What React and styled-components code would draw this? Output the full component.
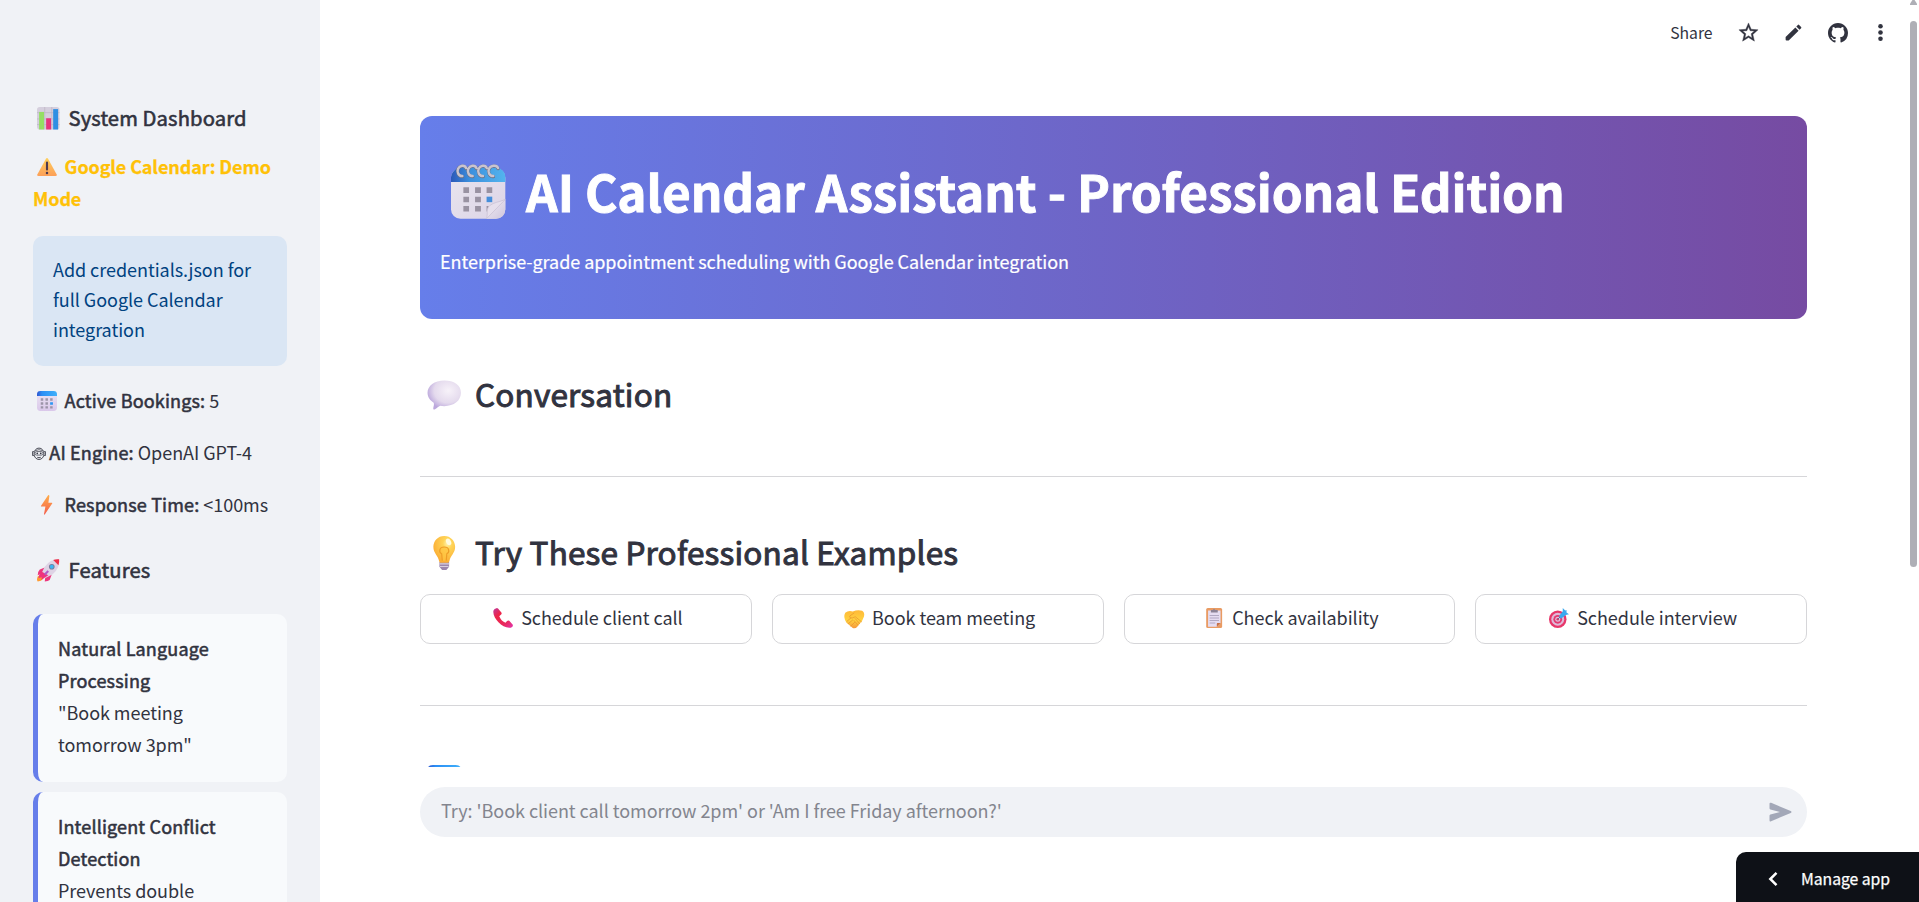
import React from "react";
import styled, { createGlobalStyle, css } from "styled-components";

const GlobalStyle = createGlobalStyle`
  * { box-sizing: border-box; }
  body {
    margin: 0;
    overflow: hidden;
    color: #31333f;
    font-family: "Noto Sans CJK SC", "Noto Sans", sans-serif;
    font-size: 18px;
    letter-spacing: -0.045px;
    line-height: 32px;
  }
  h1, h2, h3, p { margin: 0; }
`;

const semibold = (width) => css`
  font-weight: 400;
  -webkit-text-stroke: ${width}px currentColor;
`;

const Page = styled.div`
  display: flex;
  width: 100vw;
  height: 100vh;
  overflow: hidden;
  background: #fff;
`;

const Sidebar = styled.aside`
  flex: 0 0 320px;
  padding: 104px 33px 0;
  overflow: hidden;
  background: #f0f2f6;
`;

const SidebarHeading = styled.h3`
  font-size: 20.2px;
  letter-spacing: 0.12px;
  line-height: 27px;
  ${semibold(0.6)}
  white-space: nowrap;
`;

const Strong = styled.span`
  ${semibold(0.55)}
  letter-spacing: 0.16px;
`;

const Warning = styled.p`
  margin: 19px 0 22px;
  color: #ffc107;
  font-weight: 700;
  letter-spacing: -0.12px;
  -webkit-text-stroke: 0.25px currentColor;
`;

const Info = styled.div`
  height: 130px;
  padding: 18px 20px 22px;
  border-radius: 10px;
  background: #dae6f4;
  color: #004280;
  line-height: 30px;
`;

const Stats = styled.div`
  display: flex;
  flex-direction: column;
  gap: 20px;
  margin: 18px 0 36px;
  white-space: nowrap;
`;

const Features = styled.div`
  display: flex;
  flex-direction: column;
  gap: 10px;
  margin-top: 31px;
`;

const FeatureCard = styled.div`
  height: 168px;
  padding: 18px 20px 22px;
  border-left: 5px solid #667eea;
  border-radius: 10px;
  background: #f8fafc;
  white-space: nowrap;
`;

const Main = styled.main`
  display: flex;
  flex: 1;
  flex-direction: column;
  min-width: 0;
`;

const Toolbar = styled.header`
  display: flex;
  flex: 0 0 66px;
  align-items: center;
  justify-content: flex-end;
  padding: 0 26px 1px 0;
  font-size: 15.75px;
`;

const ToolButton = styled.span`
  display: flex;
  align-items: center;
  margin-left: ${(p) => p.$gap}px;
`;

const Content = styled.section`
  flex: 0 0 701px;
  padding: 50px 112px 0 100px;
  overflow: hidden;
`;

const Banner = styled.div`
  height: 203px;
  padding: 42px 20px 0;
  border-radius: 12px;
  background: linear-gradient(90deg, #667eea 0%, #764ba2 100%);
  color: #fff;
  white-space: nowrap;
`;

const Title = styled.h1`
  font-size: 49.5px;
  font-weight: 700;
  letter-spacing: -0.1px;
  line-height: 66px;
  -webkit-text-stroke: 0.9px currentColor;
`;

const Subtitle = styled.p`
  margin-top: 21px;
  -webkit-text-stroke: 0.2px currentColor;
`;

const SectionHeading = styled.h2`
  height: 42px;
  margin-top: ${(p) => p.$top}px;
  font-size: 31.5px;
  letter-spacing: 0.19px;
  line-height: 42px;
  ${semibold(1)}
  white-space: nowrap;
`;

const Divider = styled.div`
  height: 1px;
  margin-top: ${(p) => p.$top}px;
  background: #d6d6d9;
`;

const Examples = styled.div`
  display: grid;
  grid-template-columns: repeat(4, 1fr);
  gap: 20px;
  margin-top: 22px;
`;

const ExampleButton = styled.button`
  height: 50px;
  padding: 0 0 4px;
  border: 1px solid #d6d6d9;
  border-radius: 10px;
  background: #fff;
  color: inherit;
  font: inherit;
  letter-spacing: inherit;
  white-space: nowrap;
`;

const ChatArea = styled.footer`
  flex: 1;
  padding: 20px 112px 0 100px;
`;

const ChatInput = styled.div`
  display: flex;
  align-items: center;
  justify-content: space-between;
  height: 50px;
  padding: 0 15px 0 21px;
  border-radius: 25px;
  background: #f0f2f6;
  color: #83858e;
`;

const Placeholder = styled.span`
  padding-bottom: 4px;
`;

const ManageApp = styled.div`
  position: fixed;
  right: 0;
  bottom: 0;
  display: flex;
  align-items: center;
  width: 183px;
  height: 50px;
  padding: 3px 0 0 31px;
  border-top-left-radius: 10px;
  background: #0e1117;
  color: #fff;
  font-size: 15.75px;
  -webkit-text-stroke: 0.25px currentColor;
  gap: 22px;
`;

const ScrollTrack = styled.div`
  position: fixed;
  top: 0;
  right: 2px;
  width: 7px;
`;

const ScrollArrow = styled.div`
  height: 5px;
  background: #afafb6;
  clip-path: polygon(35% 0, 65% 0, 100% 75%, 100% 100%, 0 100%, 0 75%);
`;

const ScrollThumb = styled.div`
  height: 546px;
  margin-top: 16px;
  border-radius: 4px;
  background: #afafb6;
`;

const EmojiSvg = styled.svg`
  display: inline-block;
  width: ${(p) => p.$size}px;
  height: ${(p) => p.$size}px;
  margin: 0 ${(p) => p.$after}px 0 ${(p) => p.$before}px;
  vertical-align: ${(p) => p.$drop}px;
  overflow: visible;
`;

const variants = {
  text: { $size: 20, $before: 4, $after: 7.6, $drop: -3 },
  button: { $size: 20, $before: 4, $after: 8, $drop: -3 },
  small: { $size: 22.5, $before: 4, $after: 9, $drop: -3.5 },
  section: { $size: 34.5, $before: 6.5, $after: 14, $drop: -5.5 },
  title: { $size: 55, $before: 10.5, $after: 20.5, $drop: -7 },
  mono: { $size: 14, $before: -1, $after: 3.3, $drop: -0.5 },
};

const Emoji = ({ kind = "text", children }) => (
  <EmojiSvg viewBox="0 0 32 32" aria-hidden="true" {...variants[kind]}>
    {children}
  </EmojiSvg>
);

const ChartEmoji = () => (
  <Emoji kind="small">
    <rect width="32" height="32" rx="4" fill="#d5cfdd" />
    <path d="M11 0v32M21 0v32M0 8h32M0 17h32M0 25h32" stroke="#bbb3c5" strokeWidth="1" />
    <rect x="3" y="7" width="7" height="25" fill="#94df63" />
    <rect x="13" y="16" width="7" height="16" fill="#e8347c" />
    <rect x="23" y="3" width="7" height="29" fill="#2f8fe3" />
  </Emoji>
);

const WarningEmoji = () => (
  <Emoji>
    <defs>
      <linearGradient id="warn" x1="0" y1="0" x2="0" y2="1">
        <stop stopColor="#ffd05c" />
        <stop offset="1" stopColor="#fc9f58" />
      </linearGradient>
    </defs>
    <path d="M14.5 2.5q1.5-2 3 0L31.5 28q1 2.5-2 2.5h-27q-3 0-2-2.5z" fill="url(#warn)" />
    <path d="M16 9v11" stroke="#4d3a50" strokeWidth="3.4" strokeLinecap="round" />
    <circle cx="16" cy="25.500" r="2" fill="#4d3a50" />
  </Emoji>
);

const CalendarEmoji = ({ kind }) => (
  <Emoji kind={kind}>
    <defs>
      <linearGradient id="calTop">
        <stop stopColor="#2f55cf" />
        <stop offset=".25" stopColor="#2b8ff5" />
        <stop offset="1" stopColor="#3fb0fa" />
      </linearGradient>
      <linearGradient id="calBody" x1="0" y1="0" x2="0" y2="1">
        <stop stopColor="#ece6f3" />
        <stop offset="1" stopColor="#dac8ea" />
      </linearGradient>
    </defs>
    <rect width="32" height="32" rx="5.5" fill="url(#calBody)" />
    <path d="M0 8V5.500Q0 0 5.500 0h21Q32 0 32 5.500V8z" fill="url(#calTop)" />
    <path d="M6 11.500h4v4H6zm7.500 0h4v4h-4zm7.500 0h4v4h-4zM6 18h4v4H6zm7.500 0h4v4h-4zM6 24.500h4v3.500H6zm7.500 0h4v3.500h-4zm7.500 0h4v3.500h-4z" fill="#9c94a8" />
    <path d="M21 18h4.500v4H21z" fill="#2c96f3" />
  </Emoji>
);

const SpiralCalendarEmoji = () => (
  <Emoji kind="title">
    <defs>
      <linearGradient id="spTop">
        <stop stopColor="#2b58b8" />
        <stop offset=".35" stopColor="#3b8fdd" />
        <stop offset="1" stopColor="#53b4ee" />
      </linearGradient>
      <linearGradient id="spBody" x1="0" y1="0" x2="1" y2="1">
        <stop stopColor="#e9e5ef" />
        <stop offset="1" stopColor="#dcd4e6" />
      </linearGradient>
      <linearGradient id="spFold" x1="0" y1="0" x2="1" y2="1">
        <stop stopColor="#f2edf5" />
        <stop offset="1" stopColor="#cfc6dc" />
      </linearGradient>
    </defs>
    <rect y="2.500" width="31.600" height="29.300" rx="5.5" fill="url(#spBody)" />
    <path d="M0 10.500V7.500Q.5 3.500 5 2h21.500q4.900 1.200 5.100 5.500v3z" fill="url(#spTop)" />
    <path d="M7.200 13.500h3.300v3.300H7.200zm6.800 0h3.400v3.300H14zm6.700 0h3.300v3.300h-3.300zM7.200 19h3.300v3.200H7.200zm6.800 0h3.400v3.200H14zM7.200 24.400h3.300v3.300H7.200zm6.800 0h3.400v3.300H14zm6.700 0h3.300v3.300h-3.300z" fill="#9992a2" />
    <path d="M20.700 19H24v3.200h-3.300z" fill="#458edb" />
    <path d="M20.700 31.800c.8-3-.2-6 1.800-7.600 2.500-2 5.500-2 9.100-3.600v5.700q-.2 5.300-5.500 5.500z" fill="url(#spFold)" />
    <path d="M20.700 31.800c.8-3-.2-6 1.800-7.600 2.500-2 5.500-2 9.100-3.600z" fill="#e6dfec" stroke="#c6bdd2" strokeWidth=".4" />
    <g fill="none" strokeLinecap="round">
      <path stroke="#68718a" strokeWidth="1.900" d="M6.700 7.300C4.300 7.500 3.300 4.700 4.100 2.900S8 .4 8.800 2.700M12.700 7.300c-2.400.2-3.400-2.600-2.600-4.400S14 .4 14.800 2.700M18.700 7.300c-2.400.2-3.400-2.600-2.600-4.400S20 .4 20.800 2.700M24.700 7.300c-2.400.2-3.400-2.600-2.600-4.400S26.600.4 27.400 2.700" />
      <path stroke="#c9c4cf" strokeWidth="1.400" d="M6.600 7C4.300 7.200 3.300 4.500 4.100 2.700S8 .1 8.800 2.400M12.600 7c-2.300.2-3.300-2.500-2.500-4.300S14 .1 14.800 2.400M18.600 7c-2.300.2-3.300-2.500-2.500-4.300S20 .1 20.800 2.400M24.600 7c-2.300.2-3.300-2.500-2.500-4.300S26.600.1 27.400 2.400" />
    </g>
  </Emoji>
);

const RobotEmoji = () => (
  <Emoji kind="mono">
    <g fill="none" stroke="#31333f" strokeWidth="2">
      <ellipse cx="16" cy="15.500" rx="11.500" ry="13" />
      <path d="M4.500 10.500H1.200v9h3.300M27.500 10.500h3.300v9h-3.300" strokeWidth="1.800" />
      <path d="M7.500 8.500q8.500-5 17 0" strokeWidth="1.500" />
      <rect x="6.500" y="10.500" width="19" height="8" rx="4" strokeWidth="1.600" />
      <path d="M12 23.500q4 2 8 0" />
    </g>
    <circle cx="12" cy="14.500" r="2" fill="#31333f" />
    <circle cx="20" cy="14.500" r="2" fill="#31333f" />
  </Emoji>
);

const BoltEmoji = () => (
  <Emoji>
    <defs>
      <linearGradient id="bolt" x1="0" y1="0" x2="0" y2="1">
        <stop stopColor="#ffae4a" />
        <stop offset="1" stopColor="#f35d4b" />
      </linearGradient>
    </defs>
    <path d="M17.800.5 6.500 17.300q-.7 1.200.8 1.200h6.200l-2.300 11.800q0 2 1.500.5L24.300 13.400q.6-1.200-.8-1.200h-5.300L19.800 1.500q-.4-2-2-1z" fill="url(#bolt)" />
  </Emoji>
);

const RocketEmoji = () => (
  <Emoji kind="small">
    <path d="M8 20 1 25q-2 5 0 7 5-.5 8-4z" fill="#ff9c32" />
    <path d="M11 12 4 15q-3 3-3 8l7-3zm10 10-3 8q-2 2-7 2l1-8z" fill="#ed377e" />
    <path d="M31.500.5Q19 0 11 11L6 21l6 6 10-5Q33 13 31.500.5z" fill="#ded3e5" />
    <path d="M31.500.5q-5-.5-8.500 1l7.500 7.500q1.500-4 1-8.500z" fill="#ef3049" />
    <path d="m5 17-3 10 5-1-1 4 10-7" fill="#ee357d" />
    <path d="m11 22 5-5" stroke="#b15cc9" strokeWidth="3" />
    <circle cx="21" cy="11" r="4" fill="#777a96" />
    <circle cx="21" cy="11" r="2.700" fill="#3bb5f2" />
  </Emoji>
);

const SpeechEmoji = () => (
  <Emoji kind="section">
    <defs>
      <radialGradient id="speech" cx=".62" cy=".35" r=".65">
        <stop stopColor="#f7f2f9" />
        <stop offset=".65" stopColor="#e4daed" />
        <stop offset="1" stopColor="#bca8dc" />
      </radialGradient>
    </defs>
    <path d="M16 2.400C7 2.400.5 7.400.5 13.700c0 4 2.300 7.200 5.700 9.300.7 1.500-.2 3.500-.4 5-.1 1.300.7 1.500 1.700.9 2-1.100 3-2.500 4.700-3.200 1.200.2 2.500.4 3.800.4 9 0 15.500-5.200 15.500-12.400S25 2.400 16 2.400z" fill="url(#speech)" />
  </Emoji>
);

const BulbEmoji = () => (
  <Emoji kind="section">
    <defs>
      <radialGradient id="bulb" cx=".65" cy=".28" r=".7">
        <stop stopColor="#fff3b0" />
        <stop offset=".3" stopColor="#ffd457" />
        <stop offset="1" stopColor="#fbae35" />
      </radialGradient>
    </defs>
    <path d="M11.500 24h9v4.500L18 31.500h-4l-2.500-3z" fill="#9c86ad" />
    <path d="M11.500 25.800h9M12 28.300h8" stroke="#d8cedd" strokeWidth="1.100" />
    <path d="M16 0C10 0 5.900 4.600 5.900 10c0 6 4.300 8 5.300 13.200.2 1.200.8 1.600 2 1.600h5.600c1.200 0 1.800-.4 2-1.600C21.800 18 26.100 16 26.100 10 26.100 4.600 22 0 16 0z" fill="url(#bulb)" />
    <path d="m14.200 23-.6-6.500c-2.800-1.500-2.500-6.300 2.400-6.300s5.200 4.800 2.400 6.300l-.6 6.500" fill="#ffc441" fillOpacity=".65" stroke="#ee9d27" strokeWidth="1.100" />
    <ellipse cx="20" cy="5.500" rx="2.200" ry="3.300" transform="rotate(-28 20 5.500)" fill="#fffbe0" />
  </Emoji>
);

const PhoneEmoji = () => (
  <Emoji kind="button">
    <defs>
      <linearGradient id="phone" x1="0" y1="0" x2="1" y2="1">
        <stop stopColor="#bd3aa0" />
        <stop offset=".3" stopColor="#ee2448" />
        <stop offset=".7" stopColor="#e82a5f" />
        <stop offset="1" stopColor="#e236b1" />
      </linearGradient>
    </defs>
    <path d="M5.500.3Q2 .8.800 4C-2 15 15 34 28.500 31.500q3.500-1 3.500-4.500l-6-6.500q-2-1-3.500.3L20 23.500Q13.500 21 10 13l3-2.500q1.500-1.500.4-3.500L8 .8Q7-.1 5.500.3z" fill="url(#phone)" />
  </Emoji>
);

const HandshakeEmoji = () => (
  <Emoji kind="button">
    <defs>
      <linearGradient id="hands" x1="0" y1="0" x2="0" y2="1">
        <stop stopColor="#ffb938" />
        <stop offset=".55" stopColor="#ffd240" />
        <stop offset="1" stopColor="#f5963b" />
      </linearGradient>
    </defs>
    <path d="M2 7.500q5-4 12-2 8-3 15-1 4.500 3 3 9l-3 7-7 8.500q-4 5-8 3L4 23.500Q-2 14.500 2 7.500z" fill="url(#hands)" />
    <path d="m16 8-7 5q0 4 4 3l5-2 10 8M5 21l6-5M7 25l7-6M11 29l6-6M18 17l7 8M16 20l6 7" fill="none" stroke="#ea9a30" strokeWidth="1.300" strokeLinecap="round" />
  </Emoji>
);

const ClipboardEmoji = () => (
  <Emoji kind="button">
    <rect x="3.500" width="25.500" height="32" rx="2.500" fill="#e99b63" />
    <path d="M6.500 4h20v20l-6 6h-14z" fill="#e5dcf1" />
    <path d="M26.500 24h-5q-1 0-1 1v5z" fill="#c56e45" />
    <path d="M11 7V3h3.500q1.500-4 3 0H22v4z" fill="#8b8296" />
    <path d="M9 12h15M9 16h15M9 20h15M9 24h9" stroke="#a69cb7" strokeWidth="1.300" />
  </Emoji>
);

const TargetEmoji = () => (
  <Emoji kind="button">
    <circle cx="14" cy="18" r="14" fill="#e7376a" />
    <circle cx="14" cy="18" r="10.300" fill="#dfb9d8" />
    <circle cx="14" cy="18" r="7" fill="#e33a70" />
    <circle cx="14" cy="18" r="4" fill="#e0c0df" />
    <circle cx="14" cy="18" r="2" fill="#d93769" />
    <path d="m14 18 8-8" stroke="#5d6a8b" strokeWidth="1.500" />
    <path d="m16 13 6-8V0l4 4 2-1v4l4 3-5 1-8 6z" fill="#3ba9ef" />
  </Emoji>
);

const StarIcon = () => (
  <svg width="23" height="23" viewBox="0 0 24 24" fill="#31333f" stroke="#31333f" strokeWidth=".4" strokeLinejoin="round">
    <path d="m22 9.240-7.190-.620L12 2 9.190 8.630 2 9.240l5.460 4.730L5.820 21 12 17.270 18.180 21l-1.630-7.030L22 9.240zM12 15.400l-3.760 2.270 1-4.280-3.320-2.880 4.380-.380L12 6.100l1.710 4.040 4.380.380-3.320 2.880 1 4.280L12 15.400z" />
  </svg>
);

const PencilIcon = () => (
  <svg width="21" height="21" viewBox="0 0 24 24" fill="#31333f">
    <path d="M3 17.500V20q0 1 1 1h2.500L17.800 9.900l-3.700-3.700L3 17.250zM20.700 7c.4-.4.4-1 0-1.400l-2.300-2.300a1 1 0 0 0-1.400 0l-1.800 1.800 3.700 3.700z" />
  </svg>
);

const GitHubIcon = () => (
  <svg width="20" height="20" viewBox="0 0 16 16" fill="#31333f">
    <path d="M8 0C3.580 0 0 3.580 0 8c0 3.540 2.290 6.530 5.470 7.590.4.070.55-.17.55-.38 0-.19-.01-.82-.01-1.490-2.010.37-2.530-.49-2.690-.94-.09-.23-.48-.94-.82-1.130-.28-.15-.68-.52-.01-.53.63-.01 1.080.58 1.230.82.72 1.210 1.870.87 2.330.66.07-.52.28-.87.51-1.070-1.780-.2-3.640-.89-3.640-3.950 0-.87.31-1.590.82-2.150-.08-.2-.36-1.020.08-2.120 0 0 .67-.21 2.200.82.64-.18 1.320-.27 2-.27s1.360.09 2 .27c1.530-1.040 2.200-.82 2.200-.82.44 1.100.16 1.920.08 2.120.51.56.82 1.270.82 2.150 0 3.070-1.870 3.750-3.650 3.950.29.25.54.73.54 1.480 0 1.070-.01 1.930-.01 2.200 0 .21.15.46.55.38A8.010 8.010 0 0 0 16 8c0-4.420-3.580-8-8-8z" />
  </svg>
);

const MoreIcon = () => (
  <svg width="25" height="25" viewBox="0 0 24 24" fill="#31333f">
    <circle cx="12" cy="6" r="2.200" />
    <circle cx="12" cy="12" r="2.200" />
    <circle cx="12" cy="18" r="2.200" />
  </svg>
);

const SendIcon = () => (
  <svg width="23" height="20" viewBox="0 0 23 20" fill="#a3a8b8">
    <path d="M.5 1.800v4.400q0 .9.900 1.200L11 10l-9.600 2.600q-.9.200-.9 1.200v4.400q0 1.700 1.600 1l19.600-8.200q1.700-1 0-2L2.100.8Q.5.200.5 1.800z" />
  </svg>
);

const ChevronIcon = () => (
  <svg width="12" height="16" viewBox="0 0 12 16">
    <path d="M9.500 1.800 3.300 8l6.200 6.200" fill="none" stroke="#fff" strokeWidth="2.500" />
  </svg>
);

const examples = [
  [PhoneEmoji, "Schedule client call"],
  [HandshakeEmoji, "Book team meeting"],
  [ClipboardEmoji, "Check availability"],
  [TargetEmoji, "Schedule interview"],
];

export default function App() {
  return (
    <>
      <GlobalStyle />
      <Page>
        <Sidebar>
          <SidebarHeading><ChartEmoji />System Dashboard</SidebarHeading>
          <Warning><WarningEmoji />Google Calendar: Demo<br />Mode</Warning>
          <Info>Add credentials.json for<br />full Google Calendar<br />integration</Info>
          <Stats>
            <p><CalendarEmoji /><Strong>Active Bookings:</Strong> 5</p>
            <p><RobotEmoji /><Strong>AI Engine:</Strong> OpenAI GPT-4</p>
            <p><BoltEmoji /><Strong>Response Time:</Strong> &lt;100ms</p>
          </Stats>
          <SidebarHeading><RocketEmoji />Features</SidebarHeading>
          <Features>
            <FeatureCard>
              <Strong>Natural Language<br />Processing</Strong><br />
              "Book meeting<br />tomorrow 3pm"
            </FeatureCard>
            <FeatureCard>
              <Strong>Intelligent Conflict<br />Detection</Strong><br />
              Prevents double
            </FeatureCard>
          </Features>
        </Sidebar>
        <Main>
          <Toolbar>
            <ToolButton>Share</ToolButton>
            <ToolButton $gap={24.5}><StarIcon /></ToolButton>
            <ToolButton $gap={22.5}><PencilIcon /></ToolButton>
            <ToolButton $gap={24.5}><GitHubIcon /></ToolButton>
            <ToolButton $gap={20}><MoreIcon /></ToolButton>
          </Toolbar>
          <Content>
            <Banner>
              <Title><SpiralCalendarEmoji />AI Calendar Assistant - Professional Edition</Title>
              <Subtitle>Enterprise-grade appointment scheduling with Google Calendar integration</Subtitle>
            </Banner>
            <SectionHeading $top={53}><SpeechEmoji />Conversation</SectionHeading>
            <Divider $top={62} />
            <SectionHeading $top={53}><BulbEmoji />Try These Professional Examples</SectionHeading>
            <Examples>
              {examples.map(([Icon, label]) => (
                <ExampleButton key={label}><Icon />{label}</ExampleButton>
              ))}
            </Examples>
            <Divider $top={61} />
            <SectionHeading $top={53}><CalendarEmoji kind="section" /></SectionHeading>
          </Content>
          <ChatArea>
            <ChatInput>
              <Placeholder>Try: 'Book client call tomorrow 2pm' or 'Am I free Friday afternoon?'</Placeholder>
              <SendIcon />
            </ChatInput>
          </ChatArea>
        </Main>
      </Page>
      <ScrollTrack><ScrollArrow /><ScrollThumb /></ScrollTrack>
      <ManageApp><ChevronIcon />Manage app</ManageApp>
    </>
  );
}
